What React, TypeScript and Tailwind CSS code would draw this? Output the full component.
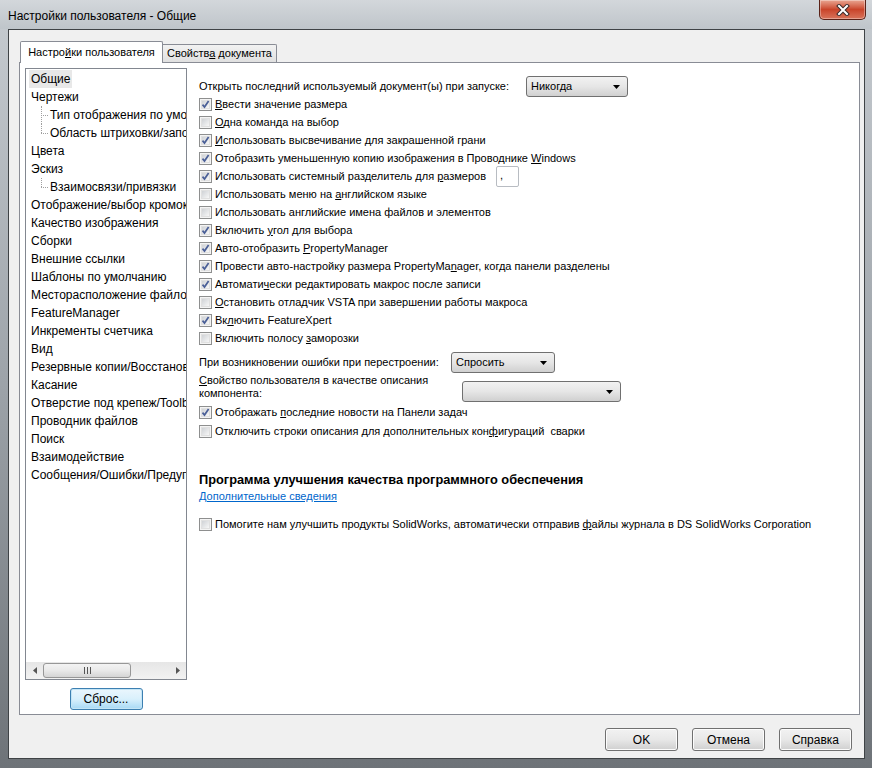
import React from 'react';

interface CheckProps {
  checked?: boolean;
  children: React.ReactNode;
  extra?: React.ReactNode;
}

const Box: React.FC<{ checked?: boolean }> = ({ checked }) => (
  <span className="w-[13px] h-[13px] shrink-0 border border-[#8e8f8f] bg-[#f4f4f4] flex items-center justify-center">
    <span className="relative w-[9px] h-[9px] bg-gradient-to-br from-[#cfd2d6] to-[#f7f7f7] border border-[#e0e0e0]">
      {checked && (
        <svg className="absolute -left-[1px] -top-[1px]" width="9" height="9" viewBox="0 0 9 9">
          <path d="M1.5 4.6 L3.5 7 L7.6 1" fill="none" stroke="#4a5f97" strokeWidth="1.7" />
        </svg>
      )}
    </span>
  </span>
);

const Check: React.FC<CheckProps> = ({ checked, children, extra }) => (
  <div className="h-[18px] flex items-center whitespace-nowrap">
    <Box checked={checked} />
    <span className="ml-[3px]">{children}</span>
    {extra}
  </div>
);

const Arrow = () => (
  <svg width="7" height="4" viewBox="0 0 7 4">
    <path d="M0 0 H7 L3.5 4 Z" fill="#000" />
  </svg>
);

const Combo: React.FC<{ className: string; text?: string }> = ({ className, text }) => (
  <div
    className={`h-[21px] shrink-0 rounded-[3px] border border-[#707070] bg-gradient-to-b from-[#f2f2f2] via-[#e6e6e6] to-[#d0d0d0] flex items-center justify-between pl-[4px] pr-[7px] ${className}`}
  >
    <span>{text}</span>
    <Arrow />
  </div>
);

const Button: React.FC<{ children: React.ReactNode; focused?: boolean }> = ({ children, focused }) =>
  focused ? (
    <div className="w-[73px] h-[22px] rounded-[3px] border border-[#3c7fb1] bg-gradient-to-b from-[#eaf6fd] via-[#d9f0fc] to-[#a7d9f5] shadow-[inset_0_0_0_1px_#c4e5f6] flex items-center justify-center">
      <span>{children}</span>
    </div>
  ) : (
    <div className="w-[73px] h-[23px] rounded-[3px] border border-[#707070] bg-gradient-to-b from-[#f2f2f2] via-[#e8e8e8] to-[#cfcfcf] shadow-[inset_0_0_0_1px_#fcfcfc] flex items-center justify-center">
      <span>{children}</span>
    </div>
  );

const treeItems: { text: string; child?: boolean; last?: boolean; selected?: boolean }[] = [
  { text: 'Общие', selected: true },
  { text: 'Чертежи' },
  { text: 'Тип отображения по умолчанию', child: true },
  { text: 'Область штриховки/заполнения', child: true, last: true },
  { text: 'Цвета' },
  { text: 'Эскиз' },
  { text: 'Взаимосвязи/привязки', child: true, last: true },
  { text: 'Отображение/выбор кромок' },
  { text: 'Качество изображения' },
  { text: 'Сборки' },
  { text: 'Внешние ссылки' },
  { text: 'Шаблоны по умолчанию' },
  { text: 'Месторасположение файлов' },
  { text: 'FeatureManager' },
  { text: 'Инкременты счетчика' },
  { text: 'Вид' },
  { text: 'Резервные копии/Восстановление' },
  { text: 'Касание' },
  { text: 'Отверстие под крепеж/Toolbox' },
  { text: 'Проводник файлов' },
  { text: 'Поиск' },
  { text: 'Взаимодействие' },
  { text: 'Сообщения/Ошибки/Предупреждения' },
];

const Tree = () => (
  <div className="w-[162px] h-[612px] border border-[#828790] bg-white flex flex-col">
    <div className="flex-1 overflow-hidden pt-[1px]">
      {treeItems.map((it) =>
        it.child ? (
          <div key={it.text} className="h-[18px] flex items-stretch pl-[15px] whitespace-nowrap">
            <span className="relative w-[7px] shrink-0">
              <span
                className={`absolute left-0 top-0 border-l border-dotted border-[#a0a0a0] ${it.last ? 'h-[9px]' : 'h-full'}`}
              />
              <span className="absolute left-0 top-[9px] w-full border-t border-dotted border-[#a0a0a0]" />
            </span>
            <span className="px-[2px] flex items-center">{it.text}</span>
          </div>
        ) : (
          <div key={it.text} className="h-[18px] flex items-stretch pl-[3px] whitespace-nowrap">
            <span className={`px-[2px] flex items-center ${it.selected ? 'bg-[#e8e8e8]' : ''}`}>{it.text}</span>
          </div>
        ),
      )}
    </div>
    <div className="h-[17px] shrink-0 bg-gradient-to-b from-[#e6e6e6] to-[#f2f2f2] flex items-center">
      <div className="w-[17px] flex items-center justify-center">
        <svg width="4" height="7" viewBox="0 0 4 7">
          <path d="M4 0 V7 L0 3.5 Z" fill="#555" />
        </svg>
      </div>
      <div className="w-[88px] h-[15px] rounded-[3px] border border-[#979797] bg-gradient-to-b from-[#f3f3f3] via-[#e9e9e9] to-[#d5d5d5] flex items-center justify-center gap-[2px]">
        <span className="w-[1px] h-[7px] bg-[#555]" />
        <span className="w-[1px] h-[7px] bg-[#555]" />
        <span className="w-[1px] h-[7px] bg-[#555]" />
      </div>
      <div className="flex-1" />
      <div className="w-[17px] flex items-center justify-center">
        <svg width="4" height="7" viewBox="0 0 4 7">
          <path d="M0 0 V7 L4 3.5 Z" fill="#555" />
        </svg>
      </div>
    </div>
  </div>
);

const CloseButton = () => (
  <div className="w-[47px] h-[20px] rounded-b-[5px] border border-t-0 border-[#5a2218] bg-gradient-to-b from-[#e8a592] via-[#c9442a] to-[#d8735a] shadow-[inset_0_0_0_1px_rgba(255,255,255,0.35)] flex items-center justify-center">
    <svg width="14" height="12" viewBox="0 0 14 12">
      <path d="M3 2 L11 10 M11 2 L3 10" stroke="#3a2a2a" strokeWidth="4" strokeLinecap="square" />
      <path d="M3 2 L11 10 M11 2 L3 10" stroke="#ffffff" strokeWidth="2" strokeLinecap="square" />
    </svg>
  </div>
);

export default function App() {
  return (
    <div className="w-[872px] h-[768px] flex flex-col bg-gradient-to-b from-[#c7ccd1] via-[#9da3a9] to-[#6e7378] text-[12px] text-black font-['Liberation_Sans',Arial,sans-serif] overflow-hidden">
      {/* title bar */}
      <div className="h-[29px] shrink-0 flex items-start justify-between pl-[8px] pr-[6px] bg-gradient-to-b from-[#d3d7db] to-[#bfc5ca]">
        <span className="mt-[7px] text-[12px]">Настройки пользователя - Общие</span>
        <CloseButton />
      </div>

      <div className="flex-1 flex pl-[8px] pr-[7px] pb-[9px]">
        {/* client */}
        <div className="flex-1 border border-[#3f4346] bg-[#f0f0f0] flex flex-col pt-[11px] pl-[10px] pr-[4px]">
          {/* tabs */}
          <div className="h-[21px] flex items-end pl-[1px] text-[11px]">
            <div className="relative z-10 w-[143px] h-[22px] -mb-[1px] border border-b-0 border-[#898c95] bg-white rounded-t-[2px] flex items-center justify-center pb-[1px]">
              <span>
                Настро<u>й</u>ки пользователя
              </span>
            </div>
            <div className="w-[114px] h-[18px] border border-b-0 border-l-0 border-[#898c95] bg-gradient-to-b from-[#f2f2f2] to-[#e0e0e0] rounded-tr-[2px] flex items-center justify-center">
              <span>
                Свойств<u>а</u> документа
              </span>
            </div>
          </div>

          {/* panel */}
          <div className="w-[841px] h-[653px] border border-[#898c95] bg-white flex items-start">
            <div className="pl-[5px] pt-[5px] flex flex-col items-center">
              <Tree />
              <div className="mt-[8px]">
                <Button focused>Сброс...</Button>
              </div>
            </div>

            <div className="ml-[12px] pt-[15px] flex flex-col text-[11px]">
              <div className="h-[17px] flex items-center whitespace-nowrap">
                <span className="w-[327px]">
                  Открыть последний используемый <u>д</u>окумент(ы) при запуске:
                </span>
                <Combo className="w-[102px]" text="Никогда" />
              </div>

              <Check checked>
                <u>В</u>вести значение размера
              </Check>
              <Check>
                <u>О</u>дна команда на выбор
              </Check>
              <Check checked>
                <u>И</u>спользовать высвечивание для закрашенной грани
              </Check>
              <Check checked>
                Отобразить уменьшенную копию изображения в Проводнике <u>W</u>indows
              </Check>
              <Check
                checked
                extra={
                  <span className="w-[23px] h-[21px] shrink-0 rounded-[2px] border border-[#b8bcc2] bg-white pl-[3px] leading-[17px]">
                    ,
                  </span>
                }
              >
                <span className="inline-block w-[281px]">
                  Использовать системный разделитель для <u>р</u>азмеров
                </span>
              </Check>
              <Check>
                Использовать меню на <u>а</u>нглийском языке
              </Check>
              <Check>Использовать английские имена файлов и элементов</Check>
              <Check checked>
                Включить <u>у</u>гол для выбора
              </Check>
              <Check checked>
                Авто-отобразить <u>P</u>ropertyManager
              </Check>
              <Check checked>
                Провести авто-настройку размера PropertyMa<u>n</u>ager, когда панели разделены
              </Check>
              <Check checked>
                Автомати<u>ч</u>ески редактировать макрос после записи
              </Check>
              <Check>
                <u>О</u>становить отладчик VSTA при завершении работы макроса
              </Check>
              <Check checked>
                Вк<u>л</u>ючить FeatureXpert
              </Check>
              <Check>
                Включить полосу <u>з</u>аморозки
              </Check>

              <div className="mt-[5px] h-[21px] flex items-center whitespace-nowrap">
                <span className="w-[252px]">При возникновении ошибки при перестроении:</span>
                <Combo className="w-[104px]" text="Спросить" />
              </div>

              <div className="mt-[1px] flex items-start whitespace-nowrap">
                <span className="w-[263px] leading-[13px]">
                  <u>С</u>войство пользователя в качестве описания
                  <br />
                  компонента:
                </span>
                <div className="mt-[7px]">
                  <Combo className="w-[159px]" />
                </div>
              </div>

              <div className="mt-[1px]">
                <Check checked>
                  Отображать <u>п</u>оследние новости на Панели задач
                </Check>
              </div>
              <div className="mt-[1px]">
                <Check>
                  Отключить строки описания для дополнительных кон<u>ф</u>игураций&nbsp; сварки
                </Check>
              </div>

              <div className="mt-[31px] h-[18px] flex items-center text-[12.8px] font-bold whitespace-nowrap">
                <span>Программа улучшения качества программного обеспечения</span>
              </div>
              <div className="h-[14px] flex items-center">
                <span className="text-[#0066cc] underline">Дополнительные сведения</span>
              </div>
              <div className="mt-[12px]">
                <Check>
                  Помогите нам улучшить продукты SolidWorks, автоматически отправив <u>ф</u>айлы журнала в DS
                  SolidWorks Corporation
                </Check>
              </div>
            </div>
          </div>

          {/* dialog buttons */}
          <div className="mt-[13px] flex justify-end gap-[14px] pr-[8px]">
            <Button>OK</Button>
            <Button>Отмена</Button>
            <Button>Справка</Button>
          </div>
        </div>
      </div>
    </div>
  );
}
